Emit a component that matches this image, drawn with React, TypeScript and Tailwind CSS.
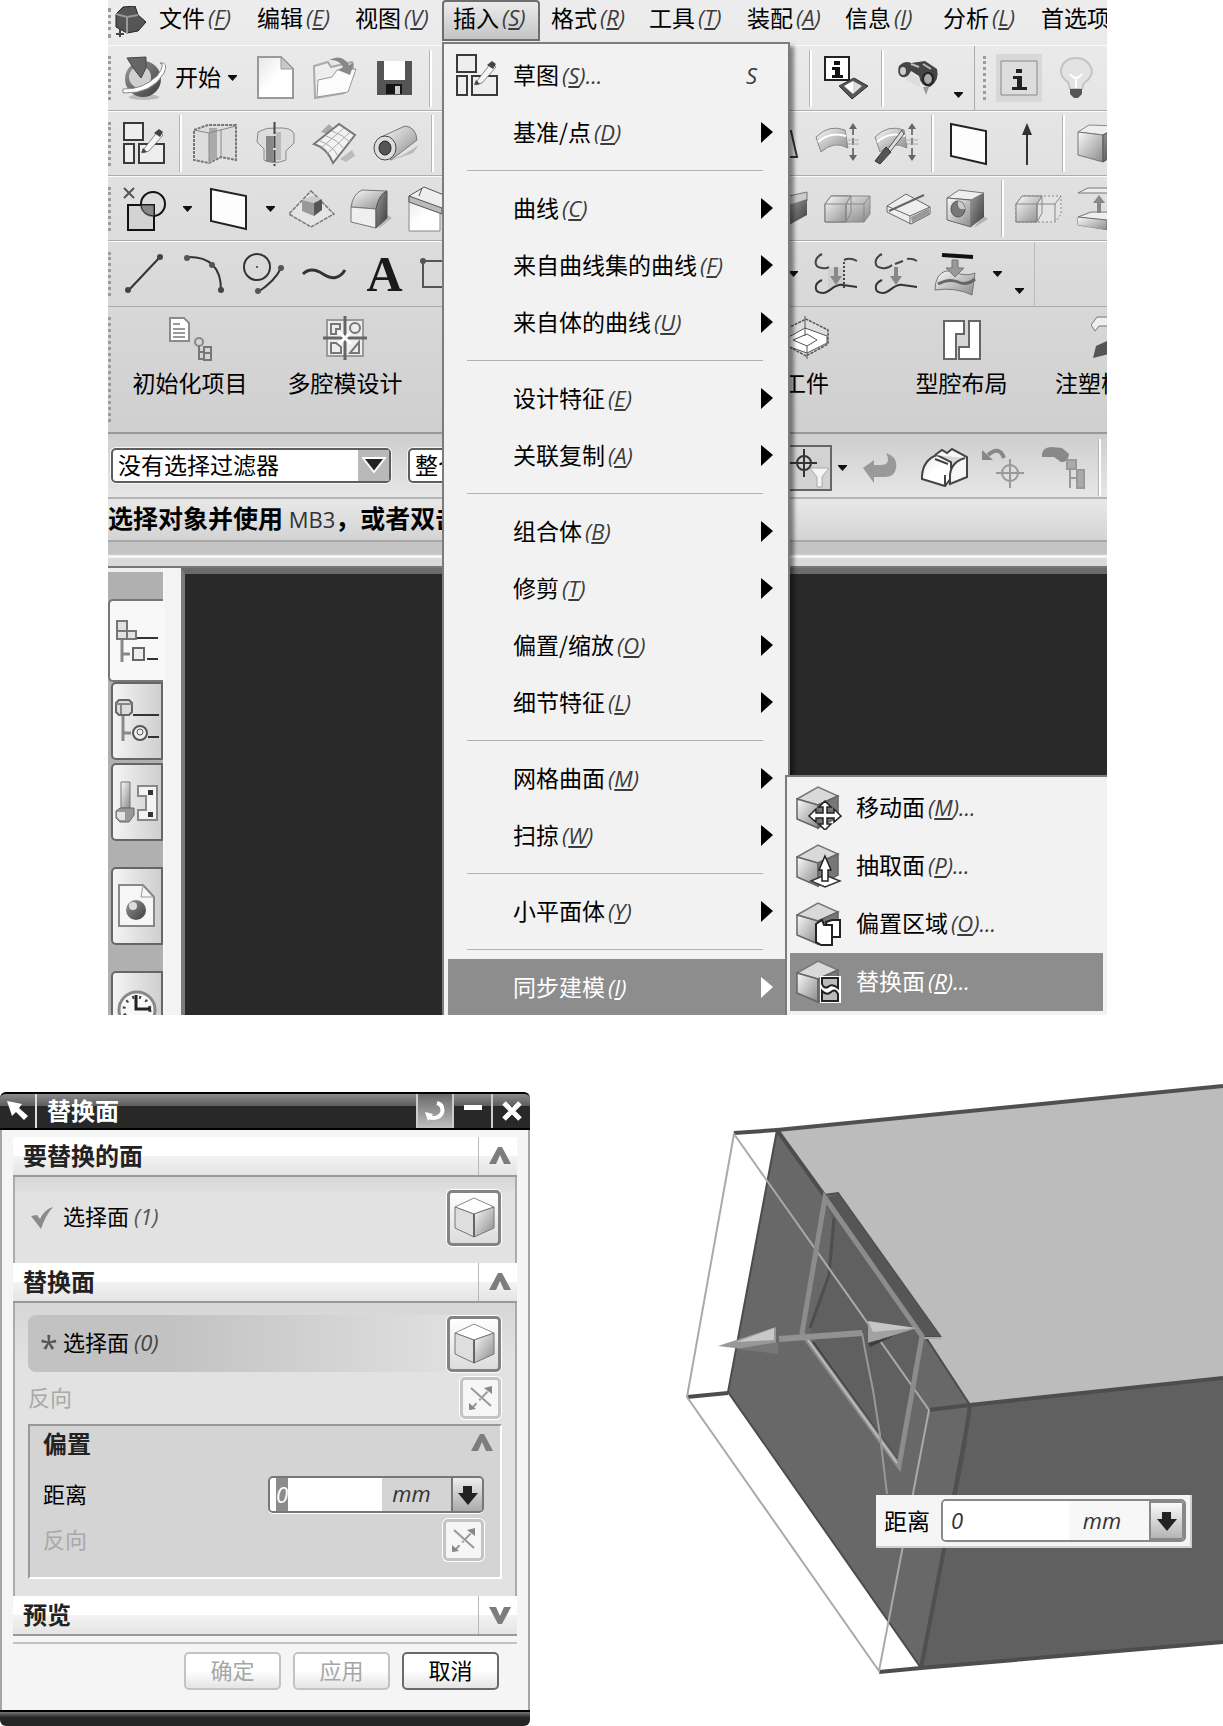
import React, { useEffect, useRef } from "react";

const CJK = "font-['Noto_Sans_CJK_SC',sans-serif]";

function Ico({ w, h, children }: { w: number; h: number; children: React.ReactNode }) {
  return (
    <svg width={w} height={h} viewBox={`0 0 ${w} ${h}`} fill="none" className="block shrink-0" aria-hidden="true">
      {children}
    </svg>
  );
}

function Tool({ label, className = "", children }: { label: string; className?: string; children: React.ReactNode }) {
  return (
    <button type="button" aria-label={label} className={`block shrink-0 ${className}`}>
      {children}
    </button>
  );
}

const Defs = () => (
  <svg width="0" height="0" className="absolute" aria-hidden="true">
    <defs>
      <linearGradient id="metal" x1="0" y1="0" x2="1" y2="1">
        <stop offset="0" stopColor="#fafafa" />
        <stop offset="1" stopColor="#8a8a8a" />
      </linearGradient>
      <linearGradient id="dark" x1="0" y1="0" x2="1" y2="1">
        <stop offset="0" stopColor="#999" />
        <stop offset="1" stopColor="#3c3c3c" />
      </linearGradient>
      <linearGradient id="paper" x1="0" y1="0" x2="1" y2="1">
        <stop offset="0" stopColor="#e6e6e6" />
        <stop offset="0.5" stopColor="#fff" />
      </linearGradient>
    </defs>
  </svg>
);

const Grip = ({ className = "h-[44px]" }: { className?: string }) => (
  <span className={`w-1 shrink-0 border-l-[3px] border-dotted border-[#9c9c9c] ${className}`} />
);
const Sep = ({ className = "" }: { className?: string }) => (
  <span className={`h-[57px] w-[3px] shrink-0 border-l border-r-2 border-l-[#b4b4b4] border-r-white ${className}`} />
);
const Caret = () => (
  <Ico w={9} h={6}>
    <path d="M0 0h9v1L4.500 6L0 1Z" fill="#111" />
  </Ico>
);

const SketchIcon = () => (
  <Ico w={43} h={43}>
    <path d="M1 1h19v17H1ZM1 22h10v19H1ZM16 22h25v19H16Z" stroke="#3a3a3a" strokeWidth="2" fill="#eee" />
    <path d="M21 27l14-18l5 4L26 29l-6 2Z" fill="#f6f6f6" stroke="#888" />
    <path d="M31 11l5-4l4 3l-3 5ZM18 31l2-5l4 4Z" fill="#444" />
  </Ico>
);
const PlaneIcon = () => (
  <Ico w={38} h={44}>
    <path d="M1 2L36 9V42L1 34Z" fill="#fdfdfd" stroke="#222" strokeWidth="2" />
  </Ico>
);
const BlockIcon = () => (
  <Ico w={42} h={40}>
    <path d="M30 38l11-9l-6-4Z" fill="#b5b5b5" />
    <path d="M1 8L12 1L42 2L26 11Z" fill="#eee" stroke="#888" />
    <path d="M1 8L26 11V38L1 31Z" fill="url(#metal)" stroke="#777" />
    <path d="M26 11L42 2V28L26 38Z" fill="url(#dark)" stroke="#555" />
  </Ico>
);
const RoundBlockIcon = () => (
  <Ico w={42} h={42}>
    <path d="M28 41l14-11l-6-4Z" fill="#b5b5b5" />
    <path d="M1 19Q3 6 12 2L37 3Q29 6 26 21Z" fill="url(#metal)" stroke="#777" />
    <path d="M1 19L26 21V40L1 34Z" fill="#efefef" stroke="#777" />
    <path d="M26 21Q29 6 37 3V30L26 40Z" fill="url(#dark)" stroke="#555" />
  </Ico>
);
const FusedIcon = ({ dashed = false }: { dashed?: boolean }) => (
  <Ico w={47} h={28}>
    <path d="M1 9L7 1H46V19L40 27H1Z" fill={dashed ? "#e4e4e4" : "url(#metal)"} stroke="#888" strokeDasharray={dashed ? "2 2" : undefined} />
    <path d="M1 9L7 1H27L22 9V27H1Z" fill="url(#metal)" stroke="#777" />
    <path d="M1 9H40L46 1M40 9V27M22 9V27M27 1V18L22 27" stroke="#888" />
  </Ico>
);
const SurfIcon = ({ tool = false }: { tool?: boolean }) => (
  <Ico w={45} h={43}>
    <path d="M1 15Q14 2 30 8L33 26Q19 18 6 30Z" fill="url(#metal)" stroke="#888" />
    <path d="M3 20Q15 9 31 14" stroke="#fff" strokeWidth="2" />
    <path d="M38 6V34" stroke="#777" strokeWidth="2" strokeDasharray="7 3" />
    <path d="M33 18H44M33 22H44" stroke="#aaa" />
    <path d="M38 1l4 6h-8ZM38 39l4-6h-8Z" fill="#666" />
    {tool && <path d="M28 8L14 27L16 30L30 12Z" fill="#ddd" stroke="#555" />}
    {tool && <path d="M12 25L1 39L6 42L17 30Z" fill="#555" stroke="#333" />}
  </Ico>
);
const CurveIcon = ({ box = false }: { box?: boolean }) => (
  <Ico w={44} h={42}>
    {box && <path d="M14 15h16v20H14Z" fill="#cfcfcf" />}
    {box && <path d="M30 35V8" stroke="#444" strokeWidth="2" strokeDasharray="2 2" />}
    <path d={box ? "M8 1C0 5-1 14 8 15Q12 16 15 14M30 7Q36 4 43 8" : "M8 1C0 5-1 14 8 15Q14 16 18 12M21 11L29 8M33 6Q38 5 43 8"} stroke="#444" strokeWidth="2" />
    <path d="M8 27C-1 31 0 40 9 40C16 40 20 30 29 32T43 34" stroke="#333" strokeWidth="2" />
    <path d="M20 14h4v9h4l-6 9l-6-9h4Z" fill="#888" />
  </Ico>
);
const NodeDoc = () => (
  <Ico w={44} h={45}>
    <path d="M2 2h14l5 5v18H2Z" fill="#fff" stroke="#8b8b8b" strokeWidth="2" />
    <path d="M5 13h12M5 17h12M5 21h12M5 8h7" stroke="#999" strokeWidth="2" />
    <circle cx="31" cy="26" r="4" stroke="#888" strokeWidth="2" />
    <path d="M31 30V44M31 36h5M31 43h5M36 31h7v13h-7ZM36 37h7" stroke="#777" strokeWidth="2" />
  </Ico>
);
const CavityIcon = () => (
  <Ico w={44} h={44}>
    <path d="M4 4h36v36H4Z" fill="#eee" stroke="#999" strokeWidth="2" />
    <path d="M0 22H44M22 0V44" stroke="#666" strokeWidth="3" />
    <path d="M16 16l12 12M28 16L16 28" stroke="#fff" strokeWidth="3" />
    <path d="M8 8h9v5h-4v5H8ZM8 27h5l5 4v6H8ZM36 26v11H27Z" stroke="#777" strokeWidth="2" />
    <circle cx="32" cy="12" r="5" stroke="#777" strokeWidth="2" />
  </Ico>
);
const IsoBox = () => (
  <Ico w={41} h={41}>
    <path d="M1 10L20 1L40 10L20 17Z" fill="#fff" stroke="#8c8c8c" />
    <path d="M1 10L20 17V40L1 31Z" fill="#dedede" stroke="#777" />
    <path d="M20 17L40 10V31L20 40Z" fill="url(#metal)" stroke="#777" />
    <path d="M20 17V40" stroke="#666" strokeWidth="2" />
  </Ico>
);
const Flip = () => (
  <Ico w={26} h={26}>
    <path d="M3 3L23 21" stroke="#999" strokeWidth="2" />
    <path d="M3 24L22 4" stroke="#999" strokeWidth="2" strokeDasharray="8 4 2 2" />
    <path d="M24 1v8l-8-6ZM1 25v-7l7 6Z" fill="#888" />
  </Ico>
);
const DownArrow = () => (
  <Ico w={20} h={20}>
    <path d="M5 1h9v7h6L10 20L0 8h5Z" fill="#222" />
  </Ico>
);
const Chevron = ({ down = false }: { down?: boolean }) => (
  <Ico w={22} h={18}>
    <path d={down ? "M0 1h7l4 9l4-9h7L13 18H9Z" : "M0 17h7l4-9l4 9h7L13 0H9Z"} fill="#7d7d7d" />
  </Ico>
);

function Mnemonic({ k, dots = false, light = false }: { k: string; dots?: boolean; light?: boolean }) {
  return (
    <span className={`ml-[3px] font-['Open_Sans',sans-serif] text-[22px] italic ${light ? "text-white" : "text-[#3c3c3c]"}`}>
      (<span className="underline decoration-2 underline-offset-2">{k}</span>){dots ? "..." : ""}
    </span>
  );
}

const menus: [string, string][] = [
  ["文件", "F"],
  ["编辑", "E"],
  ["视图", "V"],
  ["插入", "S"],
  ["格式", "R"],
  ["工具", "T"],
  ["装配", "A"],
  ["信息", "I"],
  ["分析", "L"],
  ["首选项", "P"],
];

const insertGroups: [string, string][][] = [
  [["草图", "S"], ["基准/点", "D"]],
  [["曲线", "C"], ["来自曲线集的曲线", "F"], ["来自体的曲线", "U"]],
  [["设计特征", "E"], ["关联复制", "A"]],
  [["组合体", "B"], ["修剪", "T"], ["偏置/缩放", "O"], ["细节特征", "L"]],
  [["网格曲面", "M"], ["扫掠", "W"]],
  [["小平面体", "Y"]],
  [["同步建模", "I"]],
];

function MenuBar() {
  return (
    <nav className="flex h-[45px] items-start whitespace-nowrap text-[23px]">
      <Grip className="mt-2 h-[30px]" />
      <span className="mt-[6px] mr-[1px] ml-[3px]">
        <Ico w={32} h={32}>
          <path d="M1 8L8 1L20 0L23 9L31 16L23 25L12 27L1 21Z" fill="#555" stroke="#222" />
          <path d="M1 8L12 11L23 9M12 11V27" stroke="#999" strokeWidth="2" />
          <path d="M5 22v9M1 28h8" stroke="#444" strokeWidth="2" />
        </Ico>
      </span>
      {menus.map(([t, k]) => (
        <button
          key={k + t}
          type="button"
          className={`flex h-[41px] w-[98px] shrink-0 items-center rounded-t border-2 pb-[6px] pl-[9px] ${
            k === "S" ? "border-[#6e6e6e] bg-linear-to-b from-[#ececec] to-[#c4c4c4]" : "border-transparent"
          }`}
        >
          {t}
          <Mnemonic k={k} />
        </button>
      ))}
    </nav>
  );
}

function Row({ left, right, className = "h-[65px]" }: { left: React.ReactNode; right: React.ReactNode; className?: string }) {
  return (
    <div className={`grid grid-cols-[334px_347px_1fr] border-t border-b border-t-[#fbfbfb] border-b-[#ababab] ${className}`}>
      <div className="flex min-w-0 items-center overflow-hidden">{left}</div>
      <span />
      <div className="flex min-w-0 items-center overflow-hidden">{right}</div>
    </div>
  );
}

function Toolbars() {
  return (
    <>
      <Row
        className="h-[66px] border-t-[#bbb]"
        left={
          <>
            <Grip />
            <button type="button" className="ml-[10px] flex shrink-0 items-center text-[23px]">
              <Ico w={45} h={44}>
                <ellipse cx="22" cy="41" rx="15" ry="3" fill="#bbb" />
                <circle cx="21" cy="23" r="18" fill="url(#dark)" />
                <circle cx="18" cy="21" r="11" fill="#d0d0d0" />
                <path d="M5 2L24 1L24 12L19 22L12 13Z" fill="#666" stroke="#444" />
                <path d="M1 33Q20 34 35 20Q44 8 38 7Q47 6 42 17Q30 38 1 37Z" fill="#fff" stroke="#888" />
              </Ico>
              <span className="mr-[7px] mb-1 ml-2">开始</span>
              <Caret />
            </button>
            <Tool label="新建" className="ml-[20px]">
              <Ico w={37} h={44}>
                <path d="M1 1H24L36 13V42H1Z" fill="url(#paper)" stroke="#999" strokeWidth="2" />
                <path d="M24 1V13H36Z" fill="#c9c9c9" stroke="#999" />
              </Ico>
            </Tool>
            <Tool label="打开" className="ml-[18px]">
              <Ico w={46} h={44}>
                <path d="M2 10L16 6L19 11L40 6L42 18L32 37L3 42Z" fill="#eee" stroke="#aaa" strokeWidth="2" />
                <path d="M6 24L20 21L25 14L44 13L36 36L5 41Z" fill="#fcfcfc" stroke="#999" />
                <path d="M17 4Q30-3 37 9L42 7L38 19L26 14L31 11Q27 3 17 4Z" fill="#888" />
              </Ico>
            </Tool>
            <Tool label="保存" className="ml-[19px]">
              <Ico w={35} h={36}>
                <path d="M0 1H35V35H0Z" fill="#555" />
                <path d="M7 1h21v19H7Z" fill="#fff" />
                <path d="M9 24h16v10H9Z" fill="#151515" />
                <path d="M18 26h5v8h-5Z" fill="#ccc" />
              </Ico>
            </Tool>
            <Sep className="ml-[17px]" />
          </>
        }
        right={
          <>
            <Sep className="ml-[20px]" />
            <Tool label="对象信息" className="ml-3">
              <Ico w={45} h={44}>
                <path d="M1 1h24v23H1Z" fill="#fff" stroke="#222" strokeWidth="2" />
                <path d="M10 5h6v4h-6ZM8 11h8v8h3v3H8v-3h3v-5H8Z" fill="#111" />
                <path d="M15 30L30 22L44 30L28 43Z" fill="#555" stroke="#333" />
                <path d="M20 30L29 25V38Z" fill="#fff" />
                <path d="M29 25L38 30L29 38Z" fill="#ddd" />
              </Ico>
            </Tool>
            <Sep className="ml-3" />
            <Tool label="查找" className="ml-[13px]">
              <Ico w={43} h={36}>
                <path d="M2 6Q8 0 14 3L28 1L40 9Q43 20 33 27Q24 27 22 16L14 11Q10 20 3 16Q0 12 2 6Z" fill="#444" />
                <path d="M14 12l9 7v8L8 20Z" fill="#ddd" />
                <path d="M14 4l8 3M26 4l8 5" stroke="#bbb" strokeWidth="2" />
                <ellipse cx="6" cy="11" rx="3" ry="4" fill="#ccc" />
                <ellipse cx="31" cy="19" rx="5" ry="6" fill="#aaa" stroke="#222" strokeWidth="2" />
                <path d="M26 27h6l-3 8Z" fill="#999" />
              </Ico>
            </Tool>
            <span className="mt-[34px] ml-[14px]">
              <Caret />
            </span>
            <span className="ml-[11px] h-full w-px shrink-0 bg-[#aaa]" />
            <Grip className="ml-2 h-[44px]" />
            <Tool label="信息" className="ml-[9px] bg-[#d8d8d8] px-[4px] py-[6px]">
              <Ico w={38} h={36}>
                <path d="M1 1h36v34H1Z" fill="#ddd" stroke="#888" />
                <path d="M16 9h6v4h-6ZM13 16h9v11h5v3H12v-3h5v-8h-4Z" fill="#222" />
              </Ico>
            </Tool>
            <Tool label="提示" className="ml-[18px]">
              <Ico w={33} h={42}>
                <path d="M10 32L8 25Q0 20 1 12Q4 1 16 1T32 13Q32 21 24 26L22 32Z" fill="#e3e3e3" stroke="#c4c4c4" strokeWidth="2" />
                <path d="M10 17q6 8 12 0M16 22v9" stroke="#fff" strokeWidth="2" />
                <path d="M10 32h12v5l-4 4h-4l-4-4Z" fill="#555" />
              </Ico>
            </Tool>
          </>
        }
      />
      <Row
        left={
          <>
            <Grip />
            <Tool label="草图" className="ml-[11px]"><SketchIcon /></Tool>
            <Sep className="ml-[13px]" />
            <Tool label="拉伸" className="ml-[11px]">
              <Ico w={45} h={40}>
                <path d="M1 6L15 1H43V36L28 33L16 39L1 36Z" fill="#ddd" stroke="#777" strokeWidth="2" strokeDasharray="3 1" />
                <path d="M16 4H24V34L16 39Z" fill="#aaa" />
                <path d="M1 6L16 9L43 2M16 9V38M28 5V33" stroke="#888" />
              </Ico>
            </Tool>
            <Tool label="回转" className="ml-[18px]">
              <Ico w={40} h={44}>
                <path d="M2 10Q10 5 20 6Q36 5 38 12V21L30 29V38Q18 43 8 38V27L1 20Z" fill="#ddd" stroke="#888" />
                <path d="M10 14h7v26h-7Z" fill="#888" />
                <path d="M20 10h5v28h-5Z" fill="#bbb" />
                <path d="M18.500 0V44" stroke="#444" strokeWidth="2" strokeDasharray="12 2" />
              </Ico>
            </Tool>
            <Tool label="网格" className="ml-[16px]">
              <Ico w={45} h={43}>
                <path d="M9 10l8-8l4 4l-6 6Z" fill="#aaa" />
                <path d="M28 37l12-9l3 6l-9 6Z" fill="#bbb" />
                <path d="M2 22L27 2L43 13L21 41Q15 26 2 22Z" fill="#f2f2f2" stroke="#777" strokeWidth="2" />
                <path d="M8 19Q20 23 26 34M14 14Q26 18 32 27M20 9Q31 13 38 20M8 27L32 6M15 32L38 10" stroke="#aaa" />
              </Ico>
            </Tool>
            <Tool label="管道" className="ml-[16px]">
              <Ico w={46} h={38}>
                <path d="M14 37L40 28L46 20L30 30Z" fill="#bbb" />
                <path d="M8 12L32 1Q43 2 44 15L18 35Z" fill="url(#metal)" stroke="#777" />
                <ellipse cx="12" cy="23" rx="11" ry="12" fill="#ddd" stroke="#444" />
                <ellipse cx="12" cy="23" rx="6" ry="7" fill="#555" stroke="#222" />
              </Ico>
            </Tool>
            <Sep className="ml-3" />
          </>
        }
        right={
          <>
            <Ico w={10} h={30}><path d="M0 2h2l6 26H0" stroke="#333" strokeWidth="2" /></Ico>
            <Tool label="曲面" className="ml-4"><SurfIcon /></Tool>
            <Tool label="编辑曲面" className="ml-[14px]"><SurfIcon tool /></Tool>
            <Sep className="ml-3" />
            <Tool label="基准平面" className="ml-4"><PlaneIcon /></Tool>
            <Tool label="矢量" className="ml-[33px]">
              <Ico w={12} h={42}><path d="M6 8V42" stroke="#333" strokeWidth="2" /><path d="M6 0l5 12H1Z" fill="#333" /></Ico>
            </Tool>
            <Sep className="ml-[29px]" />
            <Tool label="块" className="ml-3"><BlockIcon /></Tool>
          </>
        }
      />
      <Row
        left={
          <>
            <Grip />
            <Tool label="点集" className="ml-[11px]">
              <Ico w={45} h={44}>
                <path d="M1 1l10 10M11 1L1 11" stroke="#555" strokeWidth="2" />
                <circle cx="30" cy="17" r="12" fill="#ddd" stroke="#111" strokeWidth="2" />
                <path d="M5 18h26v25H5Z" fill="#ccc" fillOpacity="0.6" stroke="#111" strokeWidth="2" />
                <path d="M18 18h13v11Q19 28 18 18Z" fill="#888" stroke="#222" />
              </Ico>
            </Tool>
            <span className="ml-[15px]"><Caret /></span>
            <Tool label="基准平面" className="ml-[18px]"><PlaneIcon /></Tool>
            <span className="ml-[18px]"><Caret /></span>
            <Tool label="拔模" className="ml-[13px]">
              <Ico w={47} h={38}>
                <path d="M23 1L46 24L23 37L1 24Z" fill="#e5e5e5" stroke="#777" strokeWidth="1.500" strokeDasharray="4 1" />
                <path d="M14 10L24 6L34 9L26 13Z" fill="#ccc" />
                <path d="M14 10L26 13V26L14 21Z" fill="#999" />
                <path d="M26 13L34 9V20L26 26Z" fill="#555" />
              </Ico>
            </Tool>
            <Tool label="边倒圆" className="ml-[15px]"><RoundBlockIcon /></Tool>
            <Tool label="倒斜角" className="ml-4">
              <Ico w={46} h={46}>
                <path d="M1 10V45H32V22Z" fill="url(#paper)" stroke="#888" />
                <path d="M1 10L16 1L46 13V20L36 28Z" fill="#eee" stroke="#555" />
                <path d="M1 10L34 22V28L1 16ZM14 2L11 10" fill="#bbb" stroke="#555" />
              </Ico>
            </Tool>
          </>
        }
        right={
          <>
            <Ico w={22} h={36}>
              <path d="M0 5L18 1V10L0 14Z" fill="#ccc" stroke="#777" />
              <path d="M0 14L18 8V24L0 34Z" fill="url(#dark)" />
            </Ico>
            <Tool label="缝合" className="ml-[13px]"><FusedIcon /></Tool>
            <Tool label="修剪体" className="ml-[15px]">
              <Ico w={46} h={32}>
                <path d="M1 13L20 1L44 14V21L25 31L1 19Z" fill="#eee" stroke="#666" />
                <path d="M1 13L24 23V31M24 23L44 14" stroke="#666" />
                <path d="M25 24L43 15V21L26 30Z" fill="#999" />
                <path d="M3 18L38 2" stroke="#666" strokeWidth="2" />
              </Ico>
            </Tool>
            <Tool label="孔" className="ml-[14px]">
              <Ico w={42} h={40}>
                <path d="M28 39l14-9l-6-4Z" fill="#b5b5b5" />
                <path d="M1 9L13 1L38 4L25 11Z" fill="#eee" stroke="#777" />
                <path d="M1 9L25 11V38L1 31Z" fill="url(#metal)" stroke="#666" />
                <path d="M25 11L38 4V28L25 38Z" fill="url(#dark)" />
                <ellipse cx="12" cy="20" rx="7" ry="8" fill="#777" stroke="#555" />
                <path d="M12 12a8 8 0 0 1 7 8q-8 2-7-8Z" fill="#ccc" />
              </Ico>
            </Tool>
            <Sep className="ml-[13px]" />
            <Tool label="分割体" className="ml-[11px]"><FusedIcon dashed /></Tool>
            <Tool label="移动体" className="ml-[15px]">
              <Ico w={44} h={44}>
                <path d="M1 6L11 1H44L36 6ZM1 30L14 25H44V42L32 43L1 38Z" fill="#eee" stroke="#777" />
                <path d="M1 30L30 33V43L1 38Z" fill="url(#metal)" />
                <path d="M1 30L30 33L44 27M30 33V43" stroke="#666" />
                <path d="M22 8l6 8h-4v10h-4V16h-4Z" fill="#888" />
              </Ico>
            </Tool>
          </>
        }
      />
      <Row
        className="h-[66px]"
        left={
          <>
            <Grip />
            <Tool label="直线" className="ml-[13px]">
              <Ico w={39} h={40}><path d="M3 37L35 3" stroke="#333" strokeWidth="2" /><circle cx="35" cy="3" r="3" fill="#444" /><circle cx="3" cy="36" r="3" fill="#444" /></Ico>
            </Tool>
            <Tool label="圆弧" className="ml-5">
              <Ico w={42} h={40}><path d="M3 3Q37 2 37 36" stroke="#333" strokeWidth="2" /><circle cx="3" cy="4" r="3" fill="#555" /><circle cx="28" cy="11" r="3" fill="#555" /><circle cx="37" cy="36" r="3" fill="#444" /></Ico>
            </Tool>
            <Tool label="圆" className="ml-4">
              <Ico w={43} h={42}><circle cx="15" cy="14" r="13" stroke="#333" strokeWidth="2" /><circle cx="15" cy="14" r="1" fill="#333" /><path d="M16 39Q33 28 39 15" stroke="#333" strokeWidth="2" /><circle cx="39" cy="15" r="3" fill="#555" /><circle cx="16" cy="38" r="3" fill="#555" /></Ico>
            </Tool>
            <Tool label="样条" className="ml-4">
              <Ico w={47} h={14}><path d="M2 7Q10-1 22 7Q36 16 44 3" stroke="#333" strokeWidth="3" /></Ico>
            </Tool>
            <button type="button" aria-label="文本" className="ml-[17px] w-[39px] shrink-0 text-center font-['Liberation_Serif',serif] text-[50px] leading-[56px] font-bold text-[#1a1a1a]">A</button>
            <Tool label="矩形" className="ml-[15px]">
              <Ico w={30} h={34}><path d="M4 4h26v26H4Z" stroke="#555" strokeWidth="2" /><circle cx="4" cy="4" r="3" fill="#555" /></Ico>
            </Tool>
          </>
        }
        right={
          <>
            <Caret />
            <Tool label="桥接曲线" className="ml-4"><CurveIcon box /></Tool>
            <Tool label="连结曲线" className="ml-4"><CurveIcon /></Tool>
            <Tool label="投影曲线" className="ml-4">
              <Ico w={44} h={43}>
                <path d="M8 2L39 4" stroke="#111" strokeWidth="4" />
                <path d="M4 24Q10 15 20 19Q32 24 41 20L38 42Q22 34 1 37Q1 29 4 24Z" fill="url(#metal)" stroke="#777" />
                <path d="M4 31Q15 25 24 29T41 26" stroke="#666" strokeWidth="3" />
                <path d="M18 7h6v8h6l-9 9l-9-9h6Z" fill="#999" stroke="#777" />
              </Ico>
            </Tool>
            <span className="ml-[15px]"><Caret /></span>
            <span className="mt-[34px] ml-[13px]"><Caret /></span>
            <span className="ml-[10px] h-full w-px shrink-0 bg-[#bbb]" />
          </>
        }
      />
      <div className="grid h-[127px] grid-cols-[334px_347px_1fr] border-b-2 border-b-[#999] text-[23px] leading-[30px]">
        <div className="flex items-start">
          <Grip className="mt-[10px] h-[105px]" />
          <button type="button" className="mt-[9px] ml-5 flex w-[116px] shrink-0 flex-col items-center gap-[6px] whitespace-nowrap"><NodeDoc />初始化项目</button>
          <button type="button" className="mt-[9px] ml-[39px] flex w-[116px] shrink-0 flex-col items-center gap-[7px] whitespace-nowrap"><CavityIcon />多腔模设计</button>
        </div>
        <span />
        <div className="flex min-w-0 items-start overflow-hidden whitespace-nowrap">
          <button type="button" className="mt-[9px] ml-[-6px] flex w-[46px] shrink-0 flex-col items-center gap-[7px]">
            <Ico w={46} h={44}>
              <path d="M1 14L23 3L45 14V28L23 40L1 28Z" fill="#ddd" stroke="#555" strokeWidth="1.500" strokeDasharray="3 1" />
              <path d="M4 22L22 12L44 20V27L24 37L4 30Z" fill="#fff" stroke="#555" />
              <path d="M22 0V20M10 24L24 18L34 24L24 30ZM24 30V43" stroke="#555" />
            </Ico>
            工件
          </button>
          <button type="button" className="mt-[12px] ml-[86px] flex w-[93px] shrink-0 flex-col items-center gap-[6px]">
            <Ico w={40} h={42}>
              <path d="M2 2h20v13H14v25H2ZM27 2h11v38H17V28h10Z" fill="#fff" stroke="#666" strokeWidth="2" />
            </Ico>
            型腔布局
          </button>
          <button type="button" className="mt-[9px] ml-[47px] flex w-[92px] shrink-0 flex-col items-center gap-[7px]">
            <Ico w={20} h={44}>
              <path d="M0 9l6-8h14v9H8l-4 5Z" fill="#eee" stroke="#777" />
              <path d="M2 42l3-12l13-6v14Z" fill="#555" />
            </Ico>
            注塑模具
          </button>
        </div>
      </div>
    </>
  );
}

function SelectionBar() {
  return (
    <div className="grid h-[65px] grid-cols-[334px_347px_1fr] border-b-2 border-b-[#b5b5b5] bg-linear-to-b from-[#cecece] to-[#e6e6e6] text-[23px]">
      <div className="flex min-w-0 items-center gap-[17px] overflow-hidden pl-[3px]">
        <label className="relative block w-[280px] shrink-0">
          <select aria-label="选择过滤器" className="block h-[35px] w-full appearance-none rounded-[5px] border-2 border-[#5d5d5d] bg-white pb-[3px] pl-[5px] leading-[28px] shadow-[0_0_0_1px_#f4f4f4] outline-none">
            <option>没有选择过滤器</option>
          </select>
          <span className="pointer-events-none absolute top-[2px] right-[2px] flex h-[31px] w-[31px] items-center justify-center bg-[#b9b9b9]">
            <Ico w={24} h={17}><path d="M1 1h22L12 15Z" fill="#222" stroke="#fff" strokeWidth="2" /></Ico>
          </span>
        </label>
        <label className="block w-[160px] shrink-0">
          <select aria-label="选择范围" className="block h-[35px] w-full appearance-none rounded-[5px] border-2 border-[#5d5d5d] bg-white pb-[3px] pl-[5px] leading-[28px] shadow-[0_0_0_1px_#f4f4f4] outline-none">
            <option>整个装配</option>
          </select>
        </label>
      </div>
      <span />
      <div className="flex min-w-0 items-center overflow-hidden pt-1">
        <Tool label="捕捉点">
          <Ico w={43} h={46}>
            <path d="M-2 1H42V45H-2Z" fill="#d2d2d2" stroke="#666" strokeWidth="2" />
            <circle cx="15" cy="18" r="7" stroke="#333" strokeWidth="2" />
            <path d="M0 18H28M15 4V32" stroke="#333" strokeWidth="2" />
            <path d="M21 23H40L33 32V42H28V32Z" fill="#f5f5f5" stroke="#aaa" />
          </Ico>
        </Tool>
        <span className="ml-[6px]"><Caret /></span>
        <Tool label="撤销" className="ml-[16px]">
          <Ico w={34} h={30}><path d="M0 15L11 7V12H17Q29 12 23 0Q35 4 33 15Q32 24 21 24H11V30Z" fill="#999" /></Ico>
        </Tool>
        <Tool label="实体选择" className="ml-[24px]">
          <Ico w={48} h={40}>
            <path d="M1 28Q2 12 16 7L30 14V30L24 38L1 31Z" fill="url(#paper)" stroke="#444" strokeWidth="2" />
            <path d="M14 7L21 2L26 5L31 1L46 9V29L29 36V27Q30 14 44 10M24 38V27M14 11l13 5M30 14" fill="#f6f6f6" stroke="#444" strokeWidth="2" />
          </Ico>
        </Tool>
        <Tool label="旋转点" className="ml-[13px]">
          <Ico w={43} h={43}>
            <path d="M6 9Q17-1 22 12" stroke="#888" strokeWidth="4" />
            <path d="M0 4v10h11Z" fill="#888" />
            <circle cx="28" cy="27" r="8" stroke="#999" strokeWidth="2" />
            <path d="M14 27H42M28 13V42" stroke="#999" strokeWidth="2" />
          </Ico>
        </Tool>
        <Tool label="查找对象" className="ml-[16px]">
          <Ico w={44} h={43}>
            <path d="M1 8Q2 1 11 1L21 2L28 8Q27 17 20 16L13 11H1Z" fill="#888" />
            <path d="M26 14h9v9h-9ZM36 24h7v18h-7ZM29 23V42M29 32h7" fill="#aaa" stroke="#999" strokeWidth="2" />
          </Ico>
        </Tool>
        <Sep className="ml-[13px]" />
      </div>
    </div>
  );
}

function Arrow() {
  return (
    <svg width="12" height="21" viewBox="0 0 12 21" className="ml-auto" aria-hidden="true">
      <path d="M0 0L12 10L0 21Z" fill="currentColor" />
    </svg>
  );
}

function InsertMenu() {
  return (
    <div role="menu" className="absolute top-[42px] bottom-0 left-[334px] w-[348px] overflow-hidden border-2 border-b-0 border-[#7c7c7c] bg-[#f2f2f2] pt-[3px] text-[23px] whitespace-nowrap shadow-[4px_4px_4px_rgba(0,0,0,0.45)]">
      {insertGroups.map((g, gi) => (
        <React.Fragment key={gi}>
          {gi > 0 && <hr className="my-[9px] mr-[25px] ml-[23px] h-px border-0 bg-[#b2b2b2]" />}
          {g.map(([t, k]) => {
            const on = t === "同步建模";
            const first = t === "草图";
            return (
              <button
                key={t}
                type="button"
                role="menuitem"
                className={`ml-1 flex h-[57px] w-[338px] items-center pr-[13px] ${on ? "bg-[#8d8d8d] text-white" : "text-black"}`}
              >
                <span className="w-[65px] shrink-0 pl-2">{first && <SketchIcon />}</span>
                <span className="pb-[3px]">
                  {t}
                  <Mnemonic k={k} dots={first} light={on} />
                </span>
                {first ? (
                  <span className="mr-[16px] ml-auto font-['Open_Sans',sans-serif] text-[22px] text-[#3c3c3c] italic">S</span>
                ) : (
                  <Arrow />
                )}
              </button>
            );
          })}
        </React.Fragment>
      ))}
    </div>
  );
}

function FaceCube({ children }: { children: React.ReactNode }) {
  return (
    <Ico w={46} h={44}>
      <path d="M1 13L22 1L42 10L22 19Z" fill="#d9d9d9" stroke="#777" strokeWidth="1.500" />
      <path d="M1 13L22 19V42L1 33Z" fill="url(#metal)" stroke="#666" strokeWidth="1.500" />
      <path d="M22 19L42 10V31L22 42Z" fill="#777" stroke="#666" strokeWidth="1.500" />
      {children}
    </Ico>
  );
}

const faceItems: { t: string; k: string; icon: React.ReactNode }[] = [
  {
    t: "移动面",
    k: "M",
    icon: <path d="M29 15l6 6h-4v6h7v-4l7 7l-7 6v-4h-7v6h4l-6 6l-6-6h4v-6h-7v4l-7-6l7-7v4h7v-6h-4Z" fill="#fff" stroke="#222" strokeWidth="1.500" />,
  },
  {
    t: "抽取面",
    k: "P",
    icon: (
      <>
        <path d="M15 37L29 31L44 37L29 43Z" fill="#fff" stroke="#333" strokeWidth="1.500" />
        <path d="M29 12l6 14h-3v11h-6V26h-3Z" fill="#fff" stroke="#222" strokeWidth="1.500" />
      </>
    ),
  },
  {
    t: "偏置区域",
    k: "O",
    icon: (
      <>
        <path d="M30 20l6-2h8v17H33Z" fill="#fff" stroke="#222" strokeWidth="2" />
        <path d="M20 22l6-4l2 5h8v20H25l-5-3Z" fill="#fff" stroke="#222" strokeWidth="2" />
      </>
    ),
  },
  {
    t: "替换面",
    k: "R",
    icon: (
      <>
        <path d="M24 16h21v27H24Z" fill="#fff" />
        <path d="M26 18h16v10Q36 23 32 27Q28 29 26 24ZM26 31q5 5 9 1q4-4 7 2v7H26Z" fill="#bbb" stroke="#222" strokeWidth="2" />
      </>
    ),
  },
];

function FaceMenu() {
  return (
    <div role="menu" className="absolute top-[775px] right-0 bottom-0 left-[677px] overflow-hidden border-t-2 border-l-2 border-[#7c7c7c] bg-[#f2f2f2] pt-[2px] pr-1 pl-[3px] text-[23px] whitespace-nowrap">
      {faceItems.map((f) => (
        <button key={f.k} type="button" role="menuitem" className={`flex h-[58px] w-full items-center pl-[6px] ${f.k === "R" ? "bg-[#8d8d8d] text-white" : ""}`}>
          <FaceCube>{f.icon}</FaceCube>
          <span className="ml-[14px] pb-[3px]">
            {f.t}
            <Mnemonic k={f.k} dots light={f.k === "R"} />
          </span>
        </button>
      ))}
    </div>
  );
}

const tabCls = "ml-[3px] flex w-[52px] shrink-0 justify-center rounded-l-[5px] border-2 border-[#666] bg-linear-to-r from-[#f4f4f4] to-[#cfcfcf] h-[78px] items-center";

function Workspace() {
  return (
    <div className="flex h-[447px] overflow-hidden">
      <div className="flex w-[55px] shrink-0 flex-col border-t-4 border-t-[#efefef] bg-[#b0b0b0] pt-[27px]">
        <button type="button" aria-label="装配导航器" className="flex h-[83px] shrink-0 items-center justify-center rounded-l-[5px] border-y-2 border-l-2 border-[#777] bg-[#f8f8f8]">
          <Ico w={44} h={44}>
            <path d="M2 2h10v10H2ZM2 12h10v8H2ZM12 12h9v8h-9Z" fill="#e2e2e2" stroke="#777" strokeWidth="2" />
            <path d="M22 19h21M32 40h11" stroke="#333" strokeWidth="2" />
            <path d="M7 21V43M7 35h8" stroke="#888" strokeWidth="3" />
            <path d="M18 29h11v12H18Z" fill="#eee" stroke="#666" strokeWidth="2" />
          </Ico>
        </button>
        <button type="button" aria-label="部件导航器" className={tabCls}>
          <Ico w={44} h={44}>
            <path d="M1 4l3-3h10l3 3v9l-3 3H4l-3-3Z" fill="#ddd" stroke="#666" strokeWidth="2" />
            <path d="M1 5h16M6 5v10" stroke="#888" strokeWidth="2" />
            <path d="M18 16h26M33 38h11" stroke="#333" strokeWidth="2" />
            <path d="M8 17V42M8 34h8" stroke="#888" strokeWidth="3" />
            <circle cx="25" cy="34" r="7" fill="#eee" stroke="#555" strokeWidth="2" />
            <circle cx="25" cy="33" r="3" stroke="#555" />
          </Ico>
        </button>
        <button type="button" aria-label="重用库" className={`mt-[3px] ${tabCls}`}>
          <Ico w={44} h={44}>
            <path d="M6 2h9v26H6Z" fill="url(#metal)" stroke="#777" />
            <path d="M1 31l4-3h14v7l-5 7H5l-4-4Z" fill="#999" stroke="#666" />
            <path d="M2 32h8v8H5l-3-3Z" fill="#e4e4e4" />
            <path d="M23 6h19v34H23V30h8V16h-8Z" fill="#f3f3f3" stroke="#888" strokeWidth="2" />
            <path d="M33 10h5v5h-5ZM33 32h5v5h-5Z" fill="#333" />
          </Ico>
        </button>
        <button type="button" aria-label="浏览器" className={`mt-[26px] ${tabCls}`}>
          <Ico w={38} h={44}>
            <path d="M1 1h24l11 12v29H1Z" fill="#f6f6f6" stroke="#888" strokeWidth="2" />
            <path d="M25 1l-2 12h13" stroke="#999" />
            <circle cx="18" cy="26" r="10" fill="url(#dark)" />
            <circle cx="15" cy="22" r="4" fill="#ddd" />
          </Ico>
        </button>
        <button type="button" aria-label="历史记录" className={`mt-[26px] ${tabCls}`}>
          <Ico w={44} h={44}>
            <circle cx="22" cy="22" r="18" fill="#f8f8f8" stroke="#888" strokeWidth="3" />
            <circle cx="22" cy="22" r="13" stroke="#444" strokeWidth="3" strokeDasharray="2 5" />
            <path d="M21 7V21H36" stroke="#222" strokeWidth="3" />
          </Ico>
        </button>
      </div>
      <div className="w-[18px] shrink-0 border-l-2 border-l-[#f7f7f7] bg-[#f3f3f3]" />
      <div className="flex-1 border-t-[6px] border-l-4 border-t-[#6a6a6a] border-l-[#7b7b7b] bg-[#292929]" />
    </div>
  );
}

function SectionHead({ title, down = false }: { title: string; down?: boolean }) {
  return (
    <button type="button" className="flex h-[40px] w-full items-stretch border-b-2 border-b-[#999] bg-linear-to-b from-white from-50% via-[#f3f3f3] via-50% to-[#e4e4e4] text-left">
      <span className="flex-1 pl-[10px] text-[24px] leading-[35px] font-bold text-[#222]">{title}</span>
      <span className="flex w-[39px] items-center justify-center border-l border-l-[#b8b8b8] pl-[3px]"><Chevron down={down} /></span>
    </button>
  );
}

const inset = "border-x-2 border-x-[#ababab] bg-linear-to-b from-[#d6d6d6] to-[#e2e2e2] to-20%";
const boxBtn = "flex h-[56px] w-[54px] shrink-0 items-center justify-center rounded-[5px] border-[3px] border-[#838383] bg-linear-to-b from-white to-[#dcdcdc] shadow-[0_0_0_1px_#fff]";
const flipBtn = "flex h-[42px] w-[41px] items-center justify-center rounded-[5px] border-[3px] border-[#c4c4c4] bg-[#f6f6f6] shadow-[0_0_0_1px_#fff]";

function ReplaceFaceDialog() {
  const distance = useRef<HTMLInputElement>(null);
  useEffect(() => {
    distance.current?.focus({ preventScroll: true });
    distance.current?.select();
  }, []);
  return (
    <section aria-label="替换面" className="mt-[77px] flex w-[530px] shrink-0 flex-col text-[22px]">
      <header className="flex h-[38px] items-stretch rounded-t-[6px] border-y-2 border-black bg-linear-to-b from-[#8b8b8b] from-0% via-[#5d5d5d] via-35% to-[#282828] to-36% text-white">
        <span className="flex w-[37px] items-center justify-center border-r-2 border-r-[#ddd]">
          <Ico w={22} h={20}><path d="M0 0L15 3L12 7L21 15L17 19L9 11L5 15Z" fill="#fff" /></Ico>
        </span>
        <h2 className="flex-1 pl-[10px] text-[24px] leading-[31px] font-bold">替换面</h2>
        <button type="button" aria-label="重置" className="flex w-[38px] items-center justify-center border-x-2 border-x-[#ccc] bg-linear-to-b from-[#6a6a6a] to-[#c0c0c0]">
          <Ico w={22} h={22}><path d="M13 3Q20 5 18 13Q14 20 4 17" stroke="#fff" strokeWidth="4" /><path d="M1 12l8 2l-5 7Z" fill="#fff" /></Ico>
        </button>
        <button type="button" aria-label="折叠" className="flex w-[39px] items-start justify-center border-r-2 border-r-[#ccc] pt-[11px]"><span className="h-[5px] w-[18px] bg-white" /></button>
        <button type="button" aria-label="关闭" className="flex w-[37px] items-center justify-center">
          <Ico w={20} h={20}><path d="M2 2L18 18M18 2L2 18" stroke="#fff" strokeWidth="5" /></Ico>
        </button>
      </header>
      <div className="flex flex-1 flex-col border-x-2 border-x-[#a5a5a5] bg-[#f5f5f5] px-[11px] pt-[7px]">
        <SectionHead title="要替换的面" />
        <div className={`flex h-[86px] items-center pr-[14px] pb-[5px] pl-[16px] ${inset}`}>
          <Ico w={22} h={22}><path d="M0 9L6 8L9 12Q14 2 22 0Q14 9 10 22Z" fill="#8a8a8a" /></Ico>
          <span className="ml-[10px] pb-[3px]">选择面 <i className="font-['Open_Sans',sans-serif] text-[22px] text-[#555]">(1)</i></span>
          <button type="button" aria-label="选择要替换的面" className={`ml-auto ${boxBtn}`}><IsoBox /></button>
        </div>
        <SectionHead title="替换面" />
        <div className={`h-[293px] px-[13px] pt-[12px] ${inset}`}>
          <div className="flex h-[57px] items-center rounded-[8px] bg-linear-to-r from-[#c2c2c2] from-30% to-[#e0e0e0] to-90% pr-px pl-[12px]">
            <span className="mt-2 w-[23px] font-['Open_Sans',sans-serif] text-[32px] leading-[32px] text-[#555]">*</span>
            <span className="pb-[3px]">选择面 <i className="font-['Open_Sans',sans-serif] text-[22px] text-[#444]">(0)</i></span>
            <button type="button" aria-label="选择替换面" className={`ml-auto ${boxBtn}`}><IsoBox /></button>
          </div>
          <div className="mt-[5px] flex h-[42px] items-center justify-between pr-px text-[#a9a9a9]">
            <span className="pb-[3px]">反向</span>
            <button type="button" disabled aria-label="反向" className={flipBtn}><Flip /></button>
          </div>
          <div className="mt-[5px] h-[155px] border-2 border-[#989898] border-r-white border-b-white bg-[#d4d4d4] pr-[16px] pl-[13px]">
            <button type="button" className="flex h-[36px] w-full items-center justify-between pb-[2px] text-[24px] font-bold text-[#222]">
              偏置
              <span className="mr-[-9px]"><Chevron /></span>
            </button>
            <div className="mt-[14px] flex items-center justify-between">
              <label htmlFor="distance" className="pb-[2px]">距离</label>
              <div className="flex h-[37px] w-[216px] items-stretch overflow-hidden rounded-[5px] border-2 border-[#777] bg-[#d4d4d4] shadow-[0_1px_0_#fff]">
                <input id="distance" ref={distance} defaultValue="0" className="w-[112px] bg-white pl-[6px] font-['Open_Sans',sans-serif] text-[22px] italic outline-none selection:bg-[#8c8c8c] selection:text-white" />
                <span className="flex-1 pr-[10px] text-center font-['Open_Sans',sans-serif] text-[22px] leading-[31px] text-[#333] italic">mm</span>
                <button type="button" aria-label="距离选项" className="flex w-[31px] items-center justify-center border-l-2 border-l-[#777] bg-linear-to-b from-[#eee] to-[#aaa]"><DownArrow /></button>
              </div>
            </div>
            <div className="mt-[6px] flex h-[42px] items-center justify-between text-[#a9a9a9]">
              <span className="pb-[3px]">反向</span>
              <button type="button" disabled aria-label="偏置反向" className={flipBtn}><Flip /></button>
            </div>
          </div>
        </div>
        <SectionHead title="预览" down />
        <hr className="mt-[6px] border-0 border-t-2 border-t-[#c2c2c2]" />
        <div className="mt-[8px] mr-[18px] mb-[20px] flex justify-end gap-3">
          {["确定", "应用", "取消"].map((b) => (
            <button
              key={b}
              type="button"
              disabled={b !== "取消"}
              className={`h-[38px] w-[97px] rounded-[5px] border-2 bg-linear-to-b from-white from-50% to-[#e4e4e4] pb-[4px] leading-[30px] ${
                b === "取消" ? "border-[#6a6a6a] text-black" : "border-[#c3c3c3] text-[#a6a6a6]"
              }`}
            >
              {b}
            </button>
          ))}
        </div>
      </div>
      <footer className="h-[16px] rounded-b-[6px] border-t-2 border-t-black bg-linear-to-b from-[#777] to-[#262626] to-40%" />
    </section>
  );
}

function ModelView() {
  return (
    <figure className="relative mt-[55px] ml-auto h-[620px] w-[553px] shrink-0 overflow-hidden">
      <svg width="553" height="620" viewBox="0 0 553 620" fill="none" className="block" role="img" aria-label="实体模型">
        <path d="M107 60L553 16V308L300 335Z" fill="#bcbcbc" />
        <path d="M300 335L553 308V572L251 598Z" fill="#606060" />
        <path d="M107 60L154 125L168 123L270 266H255L300 335L251 598L58 322Z" fill="#686868" stroke="#4c4c4c" strokeWidth="2" />
        <path d="M156 128L168 124L270 266H255Z" fill="#565656" />
        <path d="M107 60L553 16" stroke="#505050" strokeWidth="4" />
        <path d="M300 335L553 308M251 598L553 572M209 602L251 598M64 63L107 60M17 327L58 323M259 340L300 335" stroke="#4d4d4d" strokeWidth="4" />
        <path d="M107 60L154 125" stroke="#4d4d4d" strokeWidth="4" />
        <path d="M300 335Q294 380 286 418L251 598" stroke="#505050" strokeWidth="4" />
        <path d="M254 268h17" stroke="#a8a8a8" strokeWidth="2" />
        <path d="M155 132L252 266L229 390L140 263L160 205L164 152Z" fill="#606060" />
        <path d="M164 148L159 205L140 258" stroke="#4e4e4e" strokeWidth="3" />
        <path d="M143 272L227 390" stroke="#454545" strokeWidth="3" />
        <path d="M64 64L17 327L209 601L259 340Z" stroke="#aaa" strokeWidth="2" />
        <path d="M132 263L155 128L252 266L229 396Z" stroke="#8c8c8c" strokeWidth="5" />
        <path d="M138 270L227 393" stroke="#bdbdbd" strokeWidth="2" />
        <path d="M192 263L196 285L203 320L210 365L217 424" stroke="#999" strokeWidth="2" />
        <path d="M109 269L192 263" stroke="#929292" strokeWidth="6" />
        <path d="M48 276L106 257V283Z" fill="#989898" />
        <path d="M66 272L104 258V270Z" fill="#c8c8c8" />
        <path d="M66 279L108 272V284Z" fill="#777" />
        <path d="M198 252L247 258L198 273Z" fill="#a2a2a2" />
        <path d="M198 251L245 258L203 262Z" fill="#c6c6c6" />
        <path d="M198 273L226 265L200 277Z" fill="#3f3f3f" />
      </svg>
      <div className="absolute top-[425px] left-[206px] flex h-[53px] w-[316px] items-center border-r-2 border-b-2 border-[#cfcfcf] bg-[#f5f5f5] pr-1 pl-[8px] text-[23px]">
        <label htmlFor="onscreen-distance" className="pb-px">距离</label>
        <div className="ml-[11px] flex h-[43px] flex-1 items-stretch overflow-hidden rounded-[5px] border-2 border-[#888] bg-[#f7f7f7]">
          <input id="onscreen-distance" defaultValue="0" className="w-[126px] bg-white pl-2 font-['Open_Sans',sans-serif] text-[22px] text-[#333] italic outline-none" />
          <span className="flex-1 pr-[14px] text-center font-['Open_Sans',sans-serif] text-[22px] leading-[38px] text-[#333] italic">mm</span>
          <button type="button" aria-label="距离选项" className="flex w-[35px] items-center justify-center border-2 border-[#888] bg-linear-to-b from-[#fafafa] to-[#b5b5b5]"><DownArrow /></button>
        </div>
      </div>
    </figure>
  );
}

export default function App() {
  return (
    <main className={`overflow-hidden bg-white text-black ${CJK}`}>
      <Defs />
      <section className="relative mr-[116px] ml-[108px] overflow-hidden">
        <div className="bg-linear-to-b from-[#ededed] to-[#cfcfcf]">
          <MenuBar />
          <Toolbars />
        </div>
        <SelectionBar />
        <div className="h-[43px] border-b-2 border-b-[#a8a8a8] bg-linear-to-b from-[#e8e8e8] to-[#d4d4d4]">
          <p className="w-[334px] overflow-hidden text-[25px] leading-[37px] font-bold whitespace-nowrap">
            选择对象并使用 <span className="font-['Open_Sans',sans-serif] text-[22px] font-normal text-[#333]">MB3</span>，或者双击
          </p>
        </div>
        <div className="h-[26px] border-b-2 border-b-[#777] bg-linear-to-b from-[#c4c4c4] from-50% via-white via-60% to-[#dadada] to-70%" />
        <Workspace />
        <InsertMenu />
        <FaceMenu />
      </section>
      <div className="flex items-start">
        <ReplaceFaceDialog />
        <ModelView />
      </div>
    </main>
  );
}
